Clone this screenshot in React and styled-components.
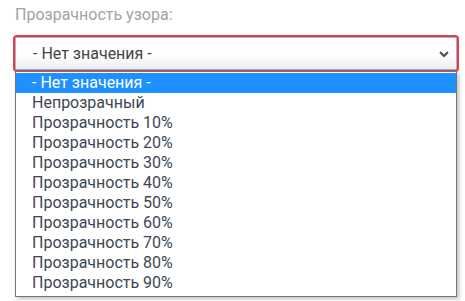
import React from 'react';
import styled, { createGlobalStyle } from 'styled-components';

const GlobalStyle = createGlobalStyle`
  body {
    margin: 0;
    background: #ffffff;
    font-family: Roboto, "Noto Sans", Arial, sans-serif;
  }
`;

const Field = styled.div`
  padding: 5px 6px 6px 13px;
  width: 446px;
`;

const Label = styled.div`
  padding-left: 2px;
  font-size: 16px;
  line-height: 20px;
  color: #a3a3a3;
  margin-bottom: 10px;
`;

const SelectBox = styled.div`
  box-sizing: border-box;
  height: 37px;
  border: 2px solid #ee3a35;
  border-radius: 4px;
  display: flex;
  align-items: center;
  justify-content: space-between;
  padding: 0 7px 0 18px;
  font-size: 16px;
  color: #444;
  background: linear-gradient(to bottom, #ffffff 0%, #ffffff 55%, #ececec 100%);
  box-shadow: inset 0 0 0 1px #8fb6ee;
`;

const Chevron = styled.svg`
  width: 12px;
  height: 12px;
  display: block;
`;

/* opened list sits right under the select, overlapping its bottom edge */
const Dropdown = styled.ul`
  position: relative;
  z-index: 1;
  width: 442px;
  box-sizing: border-box;
  margin: -1px 0 0 2px;
  padding: 1px 0 3px;
  list-style: none;
  background: #fff;
  border: 1px solid #767676;
  box-shadow: 2px 2px 4px rgba(0, 0, 0, 0.25);
`;

const Option = styled.li`
  height: 20px;
  line-height: 20px;
  padding-left: 16px;
  font-size: 16px;
  color: ${(p) => (p.$active ? '#ffffff' : '#3c4654')};
  background: ${(p) => (p.$active ? '#1e90ff' : 'transparent')};
`;

const options = [
  '- Нет значения -',
  'Непрозрачный',
  ...[10, 20, 30, 40, 50, 60, 70, 80, 90].map((n) => `Прозрачность ${n}%`),
];

const App = () => {
  return (
    <>
      <GlobalStyle />
      <Field>
        <Label>Прозрачность узора:</Label>
        <SelectBox>
          <span>- Нет значения -</span>
          <Chevron viewBox="0 0 12 12">
            <path
              d="M2 4 L6 8 L10 4"
              fill="none"
              stroke="#454b52"
              strokeWidth="2"
            />
          </Chevron>
        </SelectBox>
        <Dropdown>
          {options.map((o, i) => (
            <Option key={o} $active={i === 0}>
              {o}
            </Option>
          ))}
        </Dropdown>
      </Field>
    </>
  );
};

export default App;
